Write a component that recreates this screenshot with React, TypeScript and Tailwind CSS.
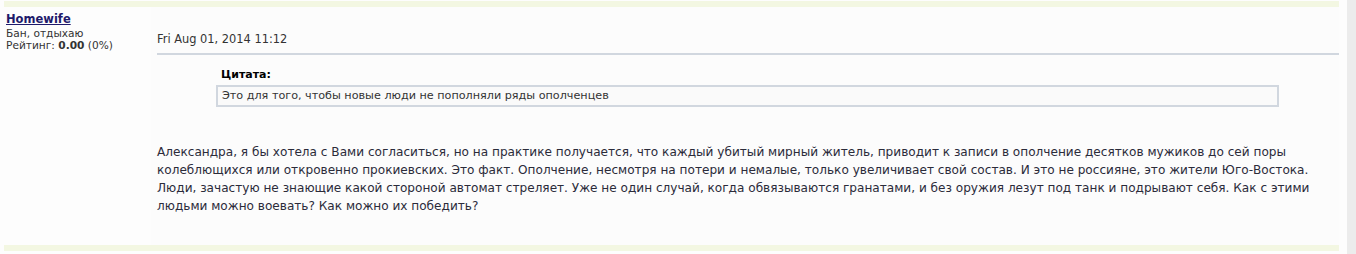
const BODY =
  "Александра, я бы хотела с Вами согласиться, но на практике получается, что каждый убитый мирный житель, приводит к записи в ополчение десятков мужиков до сей поры колеблющихся или откровенно прокиевских. Это факт. Ополчение, несмотря на потери и немалые, только увеличивает свой состав. И это не россияне, это жители Юго-Востока. Люди, зачастую не знающие какой стороной автомат стреляет. Уже не один случай, когда обвязываются гранатами, и без оружия лезут под танк и подрывают себя. Как с этими людьми можно воевать? Как можно их победить?";

export default function App() {
  return (
    <div className="flex h-[254px] w-[1356px] bg-[#fdfdfd] font-['DejaVu_Sans',Verdana,sans-serif] text-[#333]">
      <div className="flex w-[1347px] flex-col pl-[4px] pr-[8px] pt-[1px]">
        {/* top spacer bar */}
        <div className="h-[6px] bg-[#f3f7e2]" />

        <div className="flex h-[238px]">
          {/* author column */}
          <div className="w-[147px] bg-[#fdfdfd] pl-[2px] pt-[5px] text-[10.6px] leading-[12px]">
            <a href="#" className="text-[11.5px] font-bold leading-[14px] text-[#1f1a6b] underline">
              Homewife
            </a>
            <div className="mt-[1px]">Бан, отдыхаю</div>
            <div>
              Рейтинг: <b>0.00</b> (0%)
            </div>
          </div>

          {/* post column */}
          <div className="flex-1 bg-[#fcfcfc] pl-[6px] pt-[26px]">
            <div className="border-b-2 border-[#d1d7df] pb-[8px] text-[11.4px] leading-[12px]">
              Fri Aug 01, 2014 11:12
            </div>

            <div className="ml-[59px] mr-[60px] mt-[13px]">
              <div className="pl-[5px] text-[11px] font-bold leading-[14px] text-black">Цитата:</div>
              <div className="mt-[3px] border-2 border-[#d1d7df] bg-[#fafafa] px-[4px] py-[1px] text-[11.2px] leading-[16px]">
                Это для того, чтобы новые люди не пополняли ряды ополченцев
              </div>
            </div>

            <p className="mt-[36px] pr-[8px] text-[12.1px] leading-[18px] text-[#2b2b3a]">{BODY}</p>
          </div>
        </div>

        {/* bottom spacer bar */}
        <div className="h-[6px] bg-[#f3f7e2]" />
      </div>

      {/* scrollbar strip */}
      <div className="w-[9px] bg-[#ececec]" />
    </div>
  );
}
